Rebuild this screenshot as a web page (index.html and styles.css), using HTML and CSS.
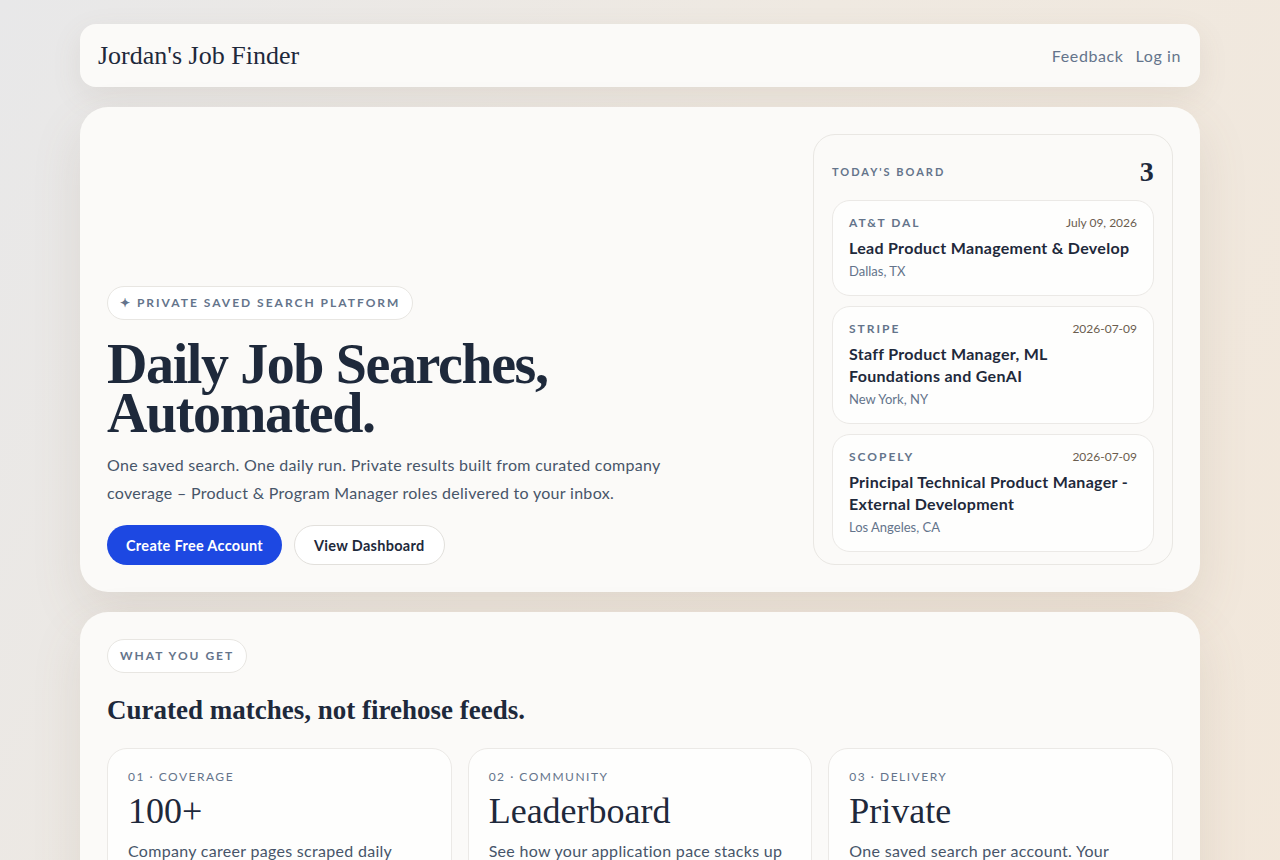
FILE: index.html
```html
<!DOCTYPE html>
<html lang="en">
<head>
    <meta charset="UTF-8">
    <meta name="viewport" content="width=device-width, initial-scale=1.0">
    <title>Jordan's Job Finder</title>
    <link rel="stylesheet" href="styles.css">
</head>
<body>
    <div class="page">
        <header class="nav">
            <a class="brand" href="#">Jordan's Job Finder</a>
            <nav class="nav-links">
                <a href="#">Feedback</a>
                <a href="#">Log in</a>
            </nav>
        </header>

        <section class="hero">
            <div class="hero-copy">
                <span class="pill">&#10022; Private saved search platform</span>
                <h1>Daily Job Searches,<br>Automated.</h1>
                <p class="lead">One saved search. One daily run. Private results built from curated company coverage &ndash; Product &amp; Program Manager roles delivered to your inbox.</p>
                <div class="actions">
                    <a class="btn btn-primary" href="#">Create Free Account</a>
                    <a class="btn btn-ghost" href="#">View Dashboard</a>
                </div>
            </div>

            <aside class="board">
                <div class="board-head">
                    <span class="board-label">Today's Board</span>
                    <span class="board-count">3</span>
                </div>
                <div class="job">
                    <div class="job-top">
                        <span class="company">AT&amp;T DAL</span>
                        <span class="date">July 09, 2026</span>
                    </div>
                    <div class="job-title nowrap">Lead Product Management &amp; Develop</div>
                    <div class="job-loc">Dallas, TX</div>
                </div>
                <div class="job">
                    <div class="job-top">
                        <span class="company">Stripe</span>
                        <span class="date">2026-07-09</span>
                    </div>
                    <div class="job-title">Staff Product Manager, ML Foundations and GenAI</div>
                    <div class="job-loc">New York, NY</div>
                </div>
                <div class="job">
                    <div class="job-top">
                        <span class="company">Scopely</span>
                        <span class="date">2026-07-09</span>
                    </div>
                    <div class="job-title">Principal Technical Product Manager - External Development</div>
                    <div class="job-loc">Los Angeles, CA</div>
                </div>
            </aside>
        </section>

        <section class="features">
            <span class="pill">What you get</span>
            <h2>Curated matches, not firehose feeds.</h2>
            <div class="feature-grid">
                <div class="feature">
                    <div class="feature-kicker">01 &middot; Coverage</div>
                    <div class="feature-big">100+</div>
                    <p>Company career pages scraped daily across tech, finance and media.</p>
                </div>
                <div class="feature">
                    <div class="feature-kicker">02 &middot; Community</div>
                    <div class="feature-big">Leaderboard</div>
                    <p>See how your application pace stacks up against other searchers.</p>
                </div>
                <div class="feature">
                    <div class="feature-kicker">03 &middot; Delivery</div>
                    <div class="feature-big">Private</div>
                    <p>One saved search per account. Your results stay yours.</p>
                </div>
            </div>
        </section>
    </div>
</body>
</html>
```

FILE: styles.css
```css
* {
    box-sizing: border-box;
}

body {
    margin: 0;
    min-height: 100vh;
    font-family: "Lato", "Noto Sans", sans-serif;
    letter-spacing: 0.3px;
    color: #1e293b;
    background: linear-gradient(120deg, #e8e8e9 0%, #efe9e1 45%, #f2e7da 100%);
}

a {
    text-decoration: none;
    color: inherit;
}

.page {
    width: 1120px;
    margin: 0 auto;
    padding: 24px 0;
    display: flex;
    flex-direction: column;
    gap: 20px;
}

/* Top bar */
.nav {
    height: 63px;
    display: flex;
    align-items: center;
    justify-content: space-between;
    padding: 0 19px 0 18px;
    background: #fbfaf8;
    border-radius: 16px;
    box-shadow: 0 10px 30px rgba(120, 100, 80, 0.10);
}

.brand {
    font-family: "Liberation Serif", serif;
    font-size: 26px;
    letter-spacing: 0;
    color: #1e293b;
}

.nav-links {
    display: flex;
    gap: 12px;
    font-size: 16px;
    letter-spacing: 0.6px;
    color: #64748b;
}

/* Hero */
.hero {
    display: flex;
    justify-content: space-between;
    align-items: stretch;
    padding: 27px;
    background: #fbfaf8;
    border-radius: 28px;
    box-shadow: 0 20px 50px rgba(120, 100, 80, 0.13);
}

.hero-copy {
    width: 590px;
    display: flex;
    flex-direction: column;
    justify-content: flex-end;
    align-items: flex-start;
}

.pill {
    display: inline-block;
    padding: 0 12px;
    height: 34px;
    line-height: 32px;
    font-size: 12px;
    font-weight: 700;
    letter-spacing: 2px;
    text-transform: uppercase;
    color: #64748b;
    background: #ffffff;
    border: 1px solid #e8e6e2;
    border-radius: 999px;
}

.hero h1 {
    margin: 20px 0 0;
    font-family: "Liberation Serif", serif;
    font-size: 56px;
    font-weight: 700;
    line-height: 49px;
    letter-spacing: -1.4px;
    color: #1e293b;
}

.lead {
    margin: 13px 0 0;
    font-size: 16px;
    line-height: 28px;
    color: #475569;
}

.actions {
    display: flex;
    gap: 12px;
    margin-top: 18px;
}

.btn {
    height: 40px;
    display: inline-flex;
    align-items: center;
    padding: 0 19px;
    border-radius: 999px;
    font-size: 14.5px;
    font-weight: 700;
}

.btn-primary {
    background: #1d48e2;
    color: #ffffff;
}

.btn-ghost {
    background: #ffffff;
    color: #1e293b;
    border: 1px solid #e2e0dc;
}

/* Today's board */
.board {
    width: 360px;
    padding: 18px 18px 12px;
    background: #fbfaf8;
    border: 1px solid #e9e7e3;
    border-radius: 22px;
    display: flex;
    flex-direction: column;
    gap: 10px;
}

.board-head {
    display: flex;
    justify-content: space-between;
    align-items: center;
    height: 37px;
}

.board-label {
    font-size: 11px;
    font-weight: 700;
    letter-spacing: 2px;
    text-transform: uppercase;
    color: #64748b;
}

.board-count {
    font-family: "Liberation Serif", serif;
    font-size: 28px;
    font-weight: 700;
    color: #1e293b;
}

.job {
    padding: 13px 16px 16px;
    background: #fefefd;
    border: 1px solid #ebe9e6;
    border-radius: 18px;
}

.job-top {
    display: flex;
    justify-content: space-between;
    align-items: baseline;
    line-height: 18px;
}

.company {
    font-size: 12px;
    font-weight: 700;
    letter-spacing: 2px;
    text-transform: uppercase;
    color: #64748b;
}

.date {
    font-size: 12px;
    letter-spacing: 0;
    color: #6b5d4f;
}

.job-title {
    margin-top: 5px;
    font-size: 16px;
    font-weight: 700;
    line-height: 22px;
    color: #1e293b;
}

.nowrap {
    white-space: nowrap;
    overflow: hidden;
}

.job-loc {
    margin-top: 4px;
    font-size: 13px;
    line-height: 16px;
    letter-spacing: 0;
    color: #64748b;
}

/* What you get */
.features {
    padding: 27px;
    background: #fbfaf8;
    border-radius: 28px;
    box-shadow: 0 20px 50px rgba(120, 100, 80, 0.13);
}

.features h2 {
    margin: 22px 0 22px;
    font-family: "Liberation Serif", serif;
    font-size: 27px;
    font-weight: 700;
    letter-spacing: 0;
    color: #1e293b;
}

.feature-grid {
    display: grid;
    grid-template-columns: repeat(3, 1fr);
    gap: 16px;
}

.feature {
    padding: 20px 20px 24px;
    background: #fefefd;
    border: 1px solid #ebe9e6;
    border-radius: 20px;
}

.feature-kicker {
    font-size: 12px;
    letter-spacing: 1.5px;
    text-transform: uppercase;
    color: #64748b;
}

.feature-big {
    margin-top: 6px;
    font-family: "Liberation Serif", serif;
    font-size: 36px;
    letter-spacing: 0;
    color: #1e293b;
}

.feature p {
    margin: 6px 0 0;
    font-size: 16px;
    line-height: 26px;
    color: #475569;
}
```
